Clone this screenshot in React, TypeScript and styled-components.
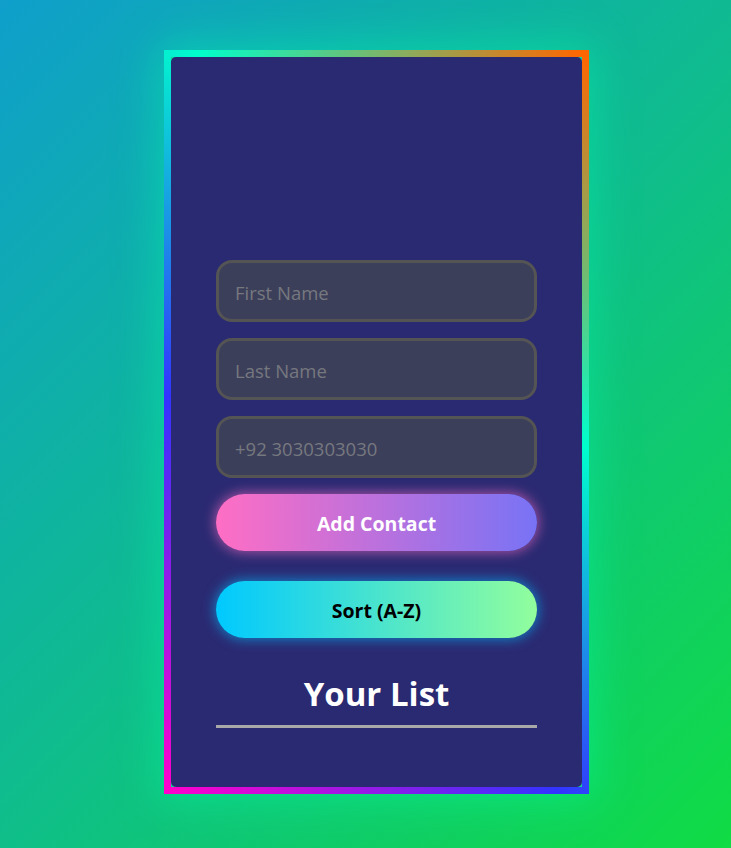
import React from "react";
import styled, { createGlobalStyle } from "styled-components";

const Global = createGlobalStyle`
  html, body { margin: 0; padding: 0; }
  body {
    min-height: 848px;
    background: linear-gradient(135deg, #0f9fcb 0%, #0fbc8e 50%, #10dc44 100%);
    font-family: "Open Sans", "Noto Sans", sans-serif;
  }
`;

const Page = styled.div`
  display: flex;
  justify-content: center;
  padding: 50px 0 0 22px;
  min-height: 848px;
  box-sizing: border-box;
`;

const Frame = styled.div`
  width: 425px;
  height: 744px;
  box-sizing: border-box;
  border: 7px solid transparent;
  border-image: linear-gradient(225deg, #ff6600 0%, #00ffcc 34%, #3333ff 66%, #ff00cc 100%) 1;
  background: #12d49c;
  box-shadow: 0 0 40px 6px rgba(0, 255, 170, 0.4);
`;

const Card = styled.div`
  height: 100%;
  background: #2a2a72;
  border-radius: 5px;
  padding: 203px 45px 0;
  box-sizing: border-box;
  display: flex;
  flex-direction: column;
`;

const Input = styled.input<{ $gap: number }>`
  height: 62px;
  box-sizing: border-box;
  margin: 0 0 ${(p) => p.$gap}px;
  border: 3px solid #545454;
  border-radius: 16px;
  background: #3c3f5a;
  padding: 2px 16px 0;
  font-family: "Open Sans", "Noto Sans", sans-serif;
  font-size: 18.5px;
  color: #ddd;
  outline: none;
  &::placeholder { color: #76787f; }
`;

const Button = styled.button<{ $variant: "add" | "sort" }>`
  height: 57px;
  border: none;
  border-radius: 29px;
  padding-top: 2px;
  font-family: "Open Sans", "Noto Sans", sans-serif;
  font-weight: 700;
  font-size: 19.5px;
  cursor: pointer;
  margin-bottom: ${(p) => (p.$variant === "add" ? 30 : 0)}px;
  color: ${(p) => (p.$variant === "add" ? "#ffffff" : "#000000")};
  background: ${(p) =>
    p.$variant === "add"
      ? "linear-gradient(90deg, #ff6ec4, #7873f5)"
      : "linear-gradient(90deg, #00c9ff, #92fe9d)"};
  box-shadow: ${(p) =>
    p.$variant === "add"
      ? "0 0 12px 2px rgba(255, 110, 196, 0.55)"
      : "0 0 12px 2px rgba(0, 190, 255, 0.55)"};
`;

const Heading = styled.h2`
  margin: 35px 0 0;
  padding-bottom: 11px;
  border-bottom: 3px solid #a8a8a8;
  text-align: center;
  color: #ffffff;
  font-family: "Open Sans", "Noto Sans", sans-serif;
  font-weight: 700;
  font-size: 33px;
  line-height: 41px;
`;

export default function App() {
  return (
    <>
      <Global />
      <Page>
        <Frame>
          <Card>
            <Input $gap={16} placeholder="First Name" />
            <Input $gap={16} placeholder="Last Name" />
            <Input $gap={16} placeholder="+92 3030303030" />
            <Button $variant="add">Add Contact</Button>
            <Button $variant="sort">Sort (A-Z)</Button>
            <Heading>Your List</Heading>
          </Card>
        </Frame>
      </Page>
    </>
  );
}
